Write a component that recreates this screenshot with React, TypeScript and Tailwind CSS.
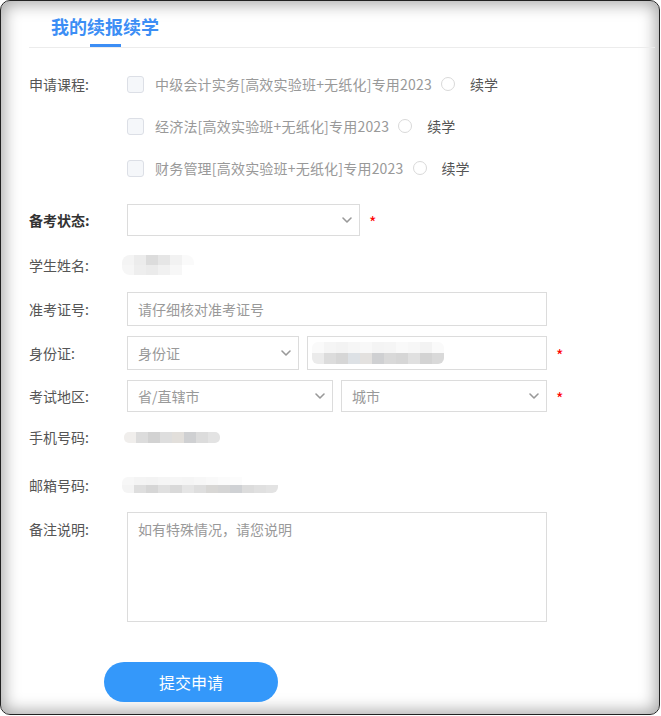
import { ChevronDown } from "lucide-react";

const COURSES = [
  "中级会计实务[高效实验班+无纸化]专用2023",
  "经济法[高效实验班+无纸化]专用2023",
  "财务管理[高效实验班+无纸化]专用2023",
];

function Label({ children, bold = false }: { children: React.ReactNode; bold?: boolean }) {
  return (
    <div
      className={
        bold
          ? "w-[98px] shrink-0 text-[14px] leading-[20px] font-bold text-[#333]"
          : "w-[98px] shrink-0 text-[14px] leading-[20px] text-[#555]"
      }
    >
      {children}
    </div>
  );
}

function Star() {
  return <span className="ml-[9px] mt-[4px] text-[16px] leading-none text-[#f00]">*</span>;
}

function Select({ text, className }: { text?: string; className: string }) {
  return (
    <div
      className={`flex h-full items-center justify-between border border-[#dcdcdc] bg-white pl-[10px] pr-[4px] ${className}`}
    >
      <span className="text-[14px] text-[#999]">{text}</span>
      <ChevronDown size={16} strokeWidth={2.4} className="text-[#999]" />
    </div>
  );
}

// pixelated privacy blur, cells listed row by row
function Mosaic({ rows, cell, className }: { rows: string[][]; cell: string; className: string }) {
  return (
    <div className={`flex flex-col overflow-hidden blur-[0.6px] ${className}`}>
      {rows.map((r, i) => (
        <div key={i} className="flex">
          {r.map((c, j) => (
            <div key={j} className={`${cell} ${c}`} />
          ))}
        </div>
      ))}
    </div>
  );
}

export default function App() {
  return (
    <div className="h-[716px] w-[661px] bg-white font-['Microsoft_YaHei','Noto_Sans_CJK_SC',sans-serif]">
      <div className="h-[715px] w-[660px] rounded-[10px] border border-[#222] shadow-[inset_0_0_16px_3px_rgba(0,0,0,0.35)]">
        <div className="pl-[28px] pr-[4px]">
          {/* header */}
          <div className="flex h-[47px] flex-col justify-between border-b border-[#ececec]">
            <div className="pl-[22px] pt-[15px] text-[18px] font-bold leading-[20px] text-[#3c8ef5]">
              我的续报续学
            </div>
            <div className="ml-[61px] h-[3px] w-[31px] bg-[#3c8ef5]" />
          </div>

          {/* courses */}
          <div className="mt-[15px] flex flex-col">
            {COURSES.map((c, i) => (
              <div key={c} className="flex h-[42px] items-center">
                <Label>{i === 0 ? "申请课程:" : ""}</Label>
                <div className="h-[17px] w-[17px] rounded-[3px] border border-[#dcdfe6] bg-[#f5f7fa]" />
                <span className="ml-[11px] text-[14px] tracking-[0.2px] text-[#999]">{c}</span>
                <div className="ml-[9px] h-[14px] w-[14px] rounded-full border border-[#d9d9d9]" />
                <span className="ml-[15px] text-[14px] text-[#555]">续学</span>
              </div>
            ))}
          </div>

          {/* 备考状态 */}
          <div className="mt-[15px] flex h-[32px] items-center">
            <Label bold>备考状态:</Label>
            <Select className="w-[233px]" />
            <Star />
          </div>

          {/* 学生姓名 */}
          <div className="mt-[14px] flex h-[30px] items-center">
            <Label>学生姓名:</Label>
            <Mosaic
              className="-ml-[5px] rounded-[8px]"
              cell="h-[10px] w-[12px]"
              rows={[
                ["bg-[#f4f4f4]", "bg-[#ececec]", "bg-[#dcdcdc]", "bg-[#e6e6e6]", "bg-[#f2f2f2]", "bg-[#fafafa]"],
                ["bg-[#f6f6f6]", "bg-[#eeeeee]", "bg-[#ebebeb]", "bg-[#f1f1f1]", "bg-[#f7f7f7]", "bg-white"],
              ]}
            />
          </div>

          {/* 准考证号 */}
          <div className="mt-[12px] flex h-[34px] items-center">
            <Label>准考证号:</Label>
            <input
              placeholder="请仔细核对准考证号"
              className="h-full w-[420px] border border-[#dcdcdc] px-[10px] text-[14px] outline-none placeholder:text-[#999]"
            />
          </div>

          {/* 身份证 */}
          <div className="mt-[10px] flex h-[34px] items-center">
            <Label>身份证:</Label>
            <Select text="身份证" className="w-[172px]" />
            <div className="ml-[8px] flex h-full w-[240px] items-center border border-[#dcdcdc] pl-[4px]">
              <Mosaic
                className="rounded-[6px]"
                cell="h-[11px] w-[12px]"
                rows={[
                  ["bg-[#fafafa]", "bg-[#f5f5f5]", "bg-[#f3f3f3]", "bg-[#f6f6f6]", "bg-[#f8f8f8]", "bg-[#f4f4f4]", "bg-[#f5f5f5]", "bg-[#f9f9f9]", "bg-[#f7f7f7]", "bg-[#f3f3f3]", "bg-[#fafafa]"],
                  ["bg-[#ebebeb]", "bg-[#dcdcdc]", "bg-[#d6d6d6]", "bg-[#dde1e5]", "bg-[#e3e1df]", "bg-[#cfd0d2]", "bg-[#d9d9d9]", "bg-[#d6d6d6]", "bg-[#e0e0e0]", "bg-[#d3d3d3]", "bg-[#d9d9d9]"],
                ]}
              />
            </div>
            <Star />
          </div>

          {/* 考试地区 */}
          <div className="mt-[10px] flex h-[32px] items-center">
            <Label>考试地区:</Label>
            <Select text="省/直辖市" className="w-[206px]" />
            <Select text="城市" className="ml-[8px] w-[206px]" />
            <Star />
          </div>

          {/* 手机号码 */}
          <div className="mt-[10px] flex h-[30px] items-center">
            <Label>手机号码:</Label>
            <Mosaic
              className="-ml-[3px] rounded-[5px]"
              cell="h-[11px] w-[12px]"
              rows={[
                ["bg-[#f0eeec]", "bg-[#dcdcdc]", "bg-[#d2d2d2]", "bg-[#dedede]", "bg-[#e2dfdb]", "bg-[#cfd0d2]", "bg-[#dcdcdc]", "bg-[#e3e3e3]"],
              ]}
            />
          </div>

          {/* 邮箱号码 */}
          <div className="mt-[18px] flex h-[30px] items-center">
            <Label>邮箱号码:</Label>
            <Mosaic
              className="-ml-[5px] rounded-[6px]"
              cell="h-[8px] w-[12px]"
              rows={[
                ["bg-[#f7f7f7]", "bg-[#f4f4f4]", "bg-[#f3f3f3]", "bg-[#f5f5f5]", "bg-[#f6f6f6]", "bg-[#f5f5f5]", "bg-[#f7f7f7]", "bg-[#f9f9f9]", "bg-[#fbfbfb]", "bg-[#fcfcfc]", "bg-white", "bg-white", "bg-white"],
                ["bg-[#f4f4f4]", "bg-[#dedede]", "bg-[#d6d6d6]", "bg-[#e0e0e0]", "bg-[#d9d9d9]", "bg-[#e5e5e5]", "bg-[#dedede]", "bg-[#d8d7d5]", "bg-[#d5d5d5]", "bg-[#cfd1d4]", "bg-[#dcdcdc]", "bg-[#e0e0e0]", "bg-[#e3e3e3]"],
              ]}
            />
          </div>

          {/* 备注说明 */}
          <div className="mt-[12px] flex items-start">
            <div className="mt-[7px]">
              <Label>备注说明:</Label>
            </div>
            <textarea
              placeholder="如有特殊情况，请您说明"
              className="h-[110px] w-[420px] resize-none border border-[#dcdcdc] px-[10px] py-[6px] text-[14px] leading-[20px] outline-none placeholder:text-[#999]"
            />
          </div>

          {/* submit */}
          <button className="ml-[75px] mt-[40px] h-[40px] w-[174px] rounded-full bg-[#3498fa] text-[16px] text-white">
            提交申请
          </button>
        </div>
      </div>
    </div>
  );
}
